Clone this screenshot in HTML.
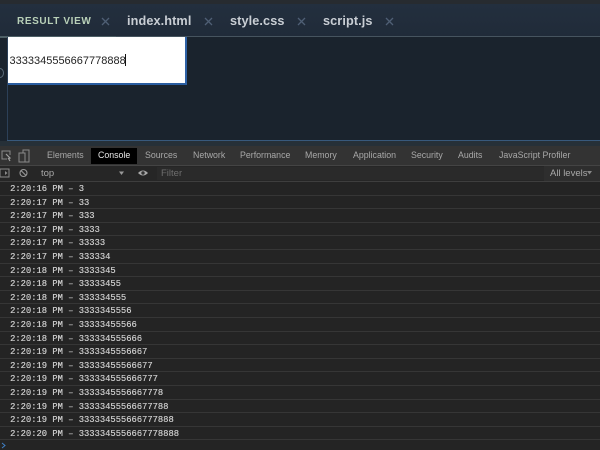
<!DOCTYPE html>
<html>
<head>
<meta charset="utf-8">
<style>
html,body{margin:0;padding:0;background:#242424}
body{width:600px;height:450px;position:relative;overflow:hidden;font-family:"Liberation Sans",sans-serif}
#w{position:absolute;left:0;top:0;width:600px;height:450px;overflow:hidden;filter:blur(.35px)}
.a{position:absolute}
.t{position:absolute;white-space:nowrap;line-height:14px}
.tab{font-weight:700;font-size:12.7px;color:#c9ced4;top:14px;line-height:14px;position:absolute;letter-spacing:.1px}
.x{position:absolute;top:17px}
.dt{position:absolute;top:149px;font-size:8.8px;color:#a8a8a8;line-height:12px;white-space:nowrap}
.row{position:absolute;left:0;width:600px;height:13.6px;border-bottom:1px solid #363636;box-sizing:border-box;font:8.8px/14px "Liberation Mono",monospace;color:#c8c8c8;padding-left:10px;white-space:pre;text-shadow:.2px 0 0 #c8c8c8}
</style>
</head>
<body>
<div id="w">
<div class="a" style="left:0;top:0;width:600px;height:4px;background:#272b30"></div>
<div class="a" style="left:0;top:4px;width:600px;height:32px;background:linear-gradient(#232f3e,#202b39)"></div>
<div class="a" style="left:0;top:36px;width:600px;height:1px;background:#46545f"></div>
<div class="a" style="left:0;top:37px;width:600px;height:104px;background:#1a232d"></div>
<div class="a" style="left:0;top:36px;width:116px;height:2px;background:#4d5f66"></div>
<div class="a" style="left:7px;top:37px;width:1px;height:104px;background:#2c4058"></div>
<div class="a" style="left:7px;top:140px;width:593px;height:1px;background:#38597c"></div>
<div class="a" style="left:-4px;top:68px;width:6px;height:8px;border:1px solid #5a6a78;border-radius:50%"></div>

<div class="t" style="left:17px;top:15px;font-size:10px;font-weight:700;color:#b9d0b8;letter-spacing:.62px">RESULT VIEW</div>
<svg class="x" style="left:101px" width="9" height="9"><path d="M1 1L8 8M8 1L1 8" stroke="#4f5f75" stroke-width="1.3"/></svg>
<div class="tab" style="left:127px">index.html</div>
<svg class="x" style="left:204px" width="9" height="9"><path d="M1 1L8 8M8 1L1 8" stroke="#4f5f75" stroke-width="1.3"/></svg>
<div class="tab" style="left:230px">style.css</div>
<svg class="x" style="left:297px" width="9" height="9"><path d="M1 1L8 8M8 1L1 8" stroke="#4f5f75" stroke-width="1.3"/></svg>
<div class="tab" style="left:323px">script.js</div>
<svg class="x" style="left:385px" width="9" height="9"><path d="M1 1L8 8M8 1L1 8" stroke="#4f5f75" stroke-width="1.3"/></svg>

<div class="a" style="left:8px;top:37px;width:177px;height:46px;background:#fff;border-right:2px solid #2f62a6;border-bottom:2px solid #2a5da0;box-sizing:content-box"></div>
<div class="t" style="left:9.5px;top:53.5px;font-size:11px;color:#222">3333345556667778888</div>
<div class="a" style="left:125px;top:54px;width:1px;height:12px;background:#111"></div>

<div class="a" style="left:0;top:141px;width:600px;height:6px;background:#263038"></div>
<div class="a" style="left:0;top:146px;width:600px;height:19px;background:#333"></div>
<div class="a" style="left:0;top:165px;width:600px;height:1px;background:#444"></div>
<svg class="a" style="left:0;top:148px" width="32" height="16" fill="none">
<path d="M7 11H2V3H10V7" stroke="#8a8a8a" stroke-width="1"/><path d="M6 6L10 10L8.5 10.5L10 13" stroke="#a0a0a0" stroke-width="1.2"/>
<rect x="19" y="5" width="6" height="9" stroke="#8a8a8a"/><path d="M23 5V2H29V14H25" stroke="#8a8a8a"/>
</svg>
<div class="a" style="left:91px;top:148px;width:46px;height:16px;background:#000"></div>
<div class="dt" style="left:47px">Elements</div>
<div class="dt" style="left:98px;color:#e8e8e8">Console</div>
<div class="dt" style="left:145px">Sources</div>
<div class="dt" style="left:193px">Network</div>
<div class="dt" style="left:240px">Performance</div>
<div class="dt" style="left:305px">Memory</div>
<div class="dt" style="left:353px">Application</div>
<div class="dt" style="left:411px">Security</div>
<div class="dt" style="left:458px">Audits</div>
<div class="dt" style="left:499px">JavaScript Profiler</div>

<div class="a" style="left:0;top:166px;width:600px;height:15px;background:#262626"></div>
<div class="a" style="left:0;top:181px;width:600px;height:1px;background:#3e3e3e"></div>
<svg class="a" style="left:0;top:167px" width="150" height="13" fill="none">
<rect x="0" y="2" width="9" height="8" stroke="#8a8a8a"/><path d="M5 4L7.5 6L5 8Z" fill="#8a8a8a"/>
<circle cx="23.5" cy="6" r="3.5" stroke="#999" stroke-width="1.1"/><path d="M21 3.5L26 8.5" stroke="#999" stroke-width="1.1"/>
<path d="M119 4.5H124L121.5 8Z" fill="#999"/>
<path d="M138 6Q143 1 148 6Q143 11 138 6Z" fill="#a8a8a8"/><circle cx="143" cy="6" r="1.7" fill="#333"/>
</svg>
<div class="t" style="left:41px;top:167px;font-size:9.5px;color:#a8a8a8">top</div>
<div class="a" style="left:157px;top:167px;width:387px;height:13px;background:#2a2a2a"></div>
<div class="t" style="left:161px;top:167px;font-size:9.5px;color:#6e6e6e">Filter</div>
<div class="a" style="left:544px;top:166px;width:56px;height:15px;background:#2e2e2e"></div>
<div class="t" style="left:550px;top:167px;font-size:9.5px;color:#a8a8a8">All levels</div>
<svg class="a" style="left:587px;top:170px" width="6" height="6"><path d="M0 1H5L2.5 4.5Z" fill="#888"/></svg>

<div class="row" style="top:182px">2:20:16 PM – 3</div>
<div class="row" style="top:195.6px">2:20:17 PM – 33</div>
<div class="row" style="top:209.2px">2:20:17 PM – 333</div>
<div class="row" style="top:222.8px">2:20:17 PM – 3333</div>
<div class="row" style="top:236.4px">2:20:17 PM – 33333</div>
<div class="row" style="top:250px">2:20:17 PM – 333334</div>
<div class="row" style="top:263.6px">2:20:18 PM – 3333345</div>
<div class="row" style="top:277.2px">2:20:18 PM – 33333455</div>
<div class="row" style="top:290.8px">2:20:18 PM – 333334555</div>
<div class="row" style="top:304.4px">2:20:18 PM – 3333345556</div>
<div class="row" style="top:318px">2:20:18 PM – 33333455566</div>
<div class="row" style="top:331.6px">2:20:18 PM – 333334555666</div>
<div class="row" style="top:345.2px">2:20:19 PM – 3333345556667</div>
<div class="row" style="top:358.8px">2:20:19 PM – 33333455566677</div>
<div class="row" style="top:372.4px">2:20:19 PM – 333334555666777</div>
<div class="row" style="top:386px">2:20:19 PM – 3333345556667778</div>
<div class="row" style="top:399.6px">2:20:19 PM – 33333455566677788</div>
<div class="row" style="top:413.2px">2:20:19 PM – 333334555666777888</div>
<div class="row" style="top:426.8px">2:20:20 PM – 3333345556667778888</div>
<svg class="a" style="left:1px;top:442px" width="5" height="7"><path d="M1 1L4 3.5L1 6" stroke="#3f7fc4" stroke-width="1" fill="none"/></svg>
</div>
</body>
</html>
